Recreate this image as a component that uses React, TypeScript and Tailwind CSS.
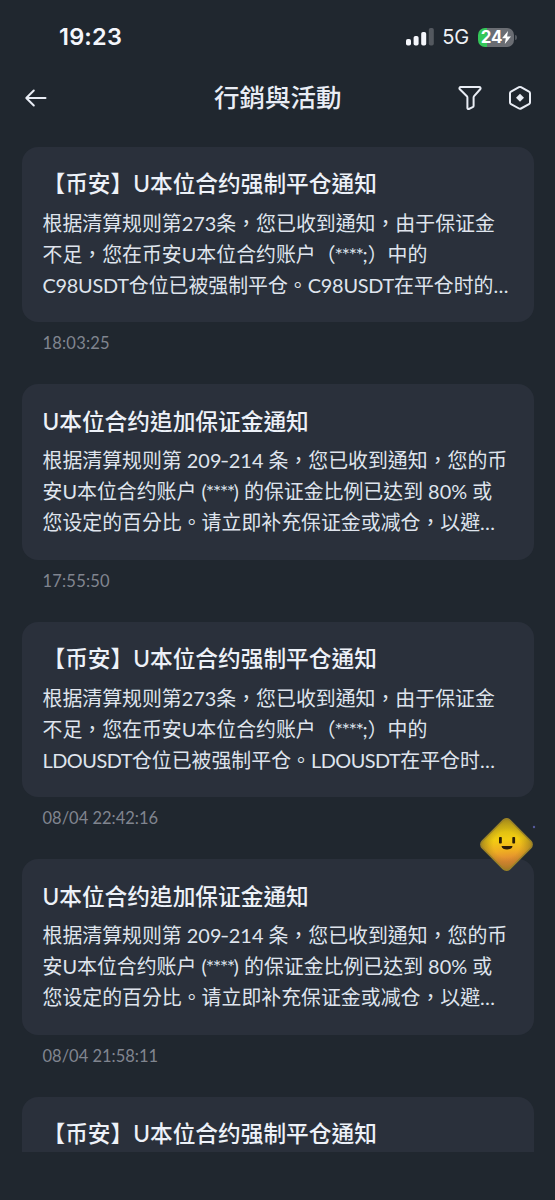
import { clsx } from 'clsx';

type Notice = {
  title: string;
  lines: string[];
  time?: string;
};

const liquidationTitle = '【币安】U本位合约强制平仓通知';
const marginTitle = 'U本位合约追加保证金通知';

const liquidationLines = ['根据清算规则第273条，您已收到通知，由于保证金', '不足，您在币安U本位合约账户（****;）中的'];

const marginLines = [
  '根据清算规则第 209-214 条，您已收到通知，您的币',
  '安U本位合约账户 (****) 的保证金比例已达到 80% 或',
  '您设定的百分比。请立即补充保证金或减仓，以避…',
];

const notices: Notice[] = [
  {
    title: liquidationTitle,
    lines: [...liquidationLines, 'C98USDT仓位已被强制平仓。C98USDT在平仓时的…'],
    time: '18:03:25',
  },
  { title: marginTitle, lines: marginLines, time: '17:55:50' },
  {
    title: liquidationTitle,
    lines: [...liquidationLines, 'LDOUSDT仓位已被强制平仓。LDOUSDT在平仓时…'],
    time: '08/04 22:42:16',
  },
  { title: marginTitle, lines: marginLines, time: '08/04 21:58:11' },
  { title: liquidationTitle, lines: [] },
];

// asterisks, dashes and tickers are spaced differently from the text around them
const spacedRuns = /(\*+|-|C98USDT|LDOUSDT)/;

function StatusBar() {
  return (
    <div className="flex h-[74px] items-center justify-between pr-[38px] pl-[59px] font-['Inter']">
      <span className="text-[23.5px] leading-none font-semibold tracking-[0.2px] text-[#f4f6fb]">19:23</span>
      <div className="flex items-center">
        <svg width="28" height="18" viewBox="0 0 28 18" fill="#f4f6fb">
          <rect x="0" y="11" width="5" height="6.5" rx="1.8" />
          <rect x="7.6" y="8" width="5" height="9.5" rx="1.8" />
          <rect x="15.2" y="4" width="5" height="13.5" rx="1.8" />
          <rect x="22.8" y="0" width="5" height="17.5" rx="1.8" fill="#53585f" />
        </svg>
        <span className="ml-[8px] text-[20px] leading-none tracking-[-0.2px] text-[#eef0f5]">5G</span>
        <div className="ml-[9px] flex h-[19px] w-9 items-center justify-center rounded-[7px] bg-[linear-gradient(90deg,#34c759_9px,#6a6d73_9px)] text-white">
          <span className="text-[17px] leading-none font-bold tracking-[-0.3px]">24</span>
          <svg width="9" height="13" viewBox="0 0 9 13" fill="currentColor">
            <path d="M6 0 0 7.3h3.8L2.8 13 9 5.4H5.1z" />
          </svg>
        </div>
        <div className="ml-px h-[5px] w-[2px] rounded-r-full bg-[#53585f]" />
      </div>
    </div>
  );
}

function Header() {
  return (
    <header className="grid h-[48px] grid-cols-[1fr_auto_1fr] items-center pr-[23.5px] pl-[24px] text-[#e9edf5]">
      <svg width="23" height="18" viewBox="0 0 23 18" fill="none" stroke="currentColor" strokeWidth="2" strokeLinecap="round" strokeLinejoin="round">
        <path d="M21.5 9H2.5M9.8 1.5 2.3 9l7.5 7.5" />
      </svg>
      <h1 className="text-[25.5px] leading-none font-medium">行銷與活動</h1>
      <div className="flex items-center justify-end gap-[25px]">
        <svg width="26" height="26" viewBox="0 0 26 26" fill="none" stroke="currentColor" strokeWidth="2" strokeLinejoin="round">
          <path d="M3.7 2h18.6a1.3 1.3 0 0 1 1.1 2L17.1 11.2a2 2 0 0 0-.5 1.3V20.8a1.5 1.5 0 0 1-.9 1.4L11.8 24a1 1 0 0 1-1.4-.9V12.5a2 2 0 0 0-.5-1.3L2.6 4a1.3 1.3 0 0 1 1.1-2Z" />
        </svg>
        <svg width="24" height="26" viewBox="0 0 24 26" fill="none" stroke="currentColor" strokeWidth="2" strokeLinejoin="round">
          <path d="M11 2.2a2 2 0 0 1 2 0l8 4.400a2 2 0 0 1 1 1.700v9.100a2 2 0 0 1-1 1.700l-8 4.400a2 2 0 0 1-2 0l-8-4.400a2 2 0 0 1-1-1.700V8.300a2 2 0 0 1 1-1.700z" />
          <path d="M12 8.800 16 12.800 12 16.800 8 12.800z" fill="currentColor" stroke="none" />
        </svg>
      </div>
    </header>
  );
}

function NoticeLine({ text }: { text: string }) {
  return (
    <span className="block">
      {text.split(spacedRuns).map((part, i) => (
        <span
          key={i}
          className={clsx(
            part.startsWith('*') && '-ml-px tracking-[-1.5px]',
            part === '-' && 'inline-block origin-center scale-x-125 -translate-y-px',
            part === 'C98USDT' && 'tracking-[-0.25px]',
            part === 'LDOUSDT' && 'tracking-[-0.5px]',
          )}
        >
          {part}
        </span>
      ))}
    </span>
  );
}

function NoticeCard({ notice }: { notice: Notice }) {
  if (!notice.time) {
    return (
      <li className="h-[55.5px] shrink-0 rounded-t-[16px] bg-[#2a303b] px-[21px] pt-[21.5px]">
        <h2 className="text-[22.7px] leading-[32px] font-medium whitespace-nowrap text-[#edf1f8]">{notice.title}</h2>
      </li>
    );
  }

  return (
    <li className="h-[237.5px] shrink-0">
      <article className="h-[175.5px] rounded-[16px] bg-[#2a303b] px-[21px] pt-[21.5px]">
        <h2 className="text-[22.7px] leading-[32px] font-medium whitespace-nowrap text-[#edf1f8]">{notice.title}</h2>
        <p className="mt-[7.5px] text-[19.9px] leading-[31.2px] whitespace-nowrap text-[#dfe4ed]">
          {notice.lines.map((line) => (
            <NoticeLine key={line} text={line} />
          ))}
        </p>
      </article>
      <time className={clsx('mt-[9px] block pl-[21px] text-[16.5px] leading-6 text-[#80858f]', notice.time.length < 9 && 'tracking-[0.2px]')}>
        {notice.time}
      </time>
    </li>
  );
}

function Mascot() {
  return (
    <div className="absolute top-[817px] left-[479px]">
      <svg width="58" height="56" viewBox="0 0 58 56">
        <defs>
          <linearGradient id="face" gradientUnits="userSpaceOnUse" x1="25" y1="4" x2="29" y2="52">
            <stop offset="0.15" stopColor="#d9bb12" />
            <stop offset="0.38" stopColor="#f3cd12" />
            <stop offset="0.62" stopColor="#efae22" />
            <stop offset="0.85" stopColor="#df8236" />
          </linearGradient>
          <radialGradient id="rim">
            <stop offset="0.5" stopColor="#a98a18" stopOpacity="0" />
            <stop offset="1" stopColor="#8d7420" stopOpacity="0.75" />
          </radialGradient>
        </defs>
        <path
          d="M24 3.300a5 5 0 0 1 7 0L51.700 24a5 5 0 0 1 0 7L31 51.700a5 5 0 0 1-7 0L3.300 31a5 5 0 0 1 0-7z"
          fill="url(#face)"
        />
        <path
          d="M24 3.300a5 5 0 0 1 7 0L51.700 24a5 5 0 0 1 0 7L31 51.700a5 5 0 0 1-7 0L3.300 31a5 5 0 0 1 0-7z"
          fill="url(#rim)"
          stroke="#9a8228"
          strokeWidth="1.5"
        />
        <rect x="20" y="20" width="2.8" height="6.5" rx="0.8" fill="#2a1c08" />
        <rect x="33.3" y="20" width="2.8" height="6.5" rx="0.8" fill="#2a1c08" />
        <path d="M22.500 29h11c-.3 2.400-2.500 3.500-5.500 3.500s-5.200-1.100-5.500-3.500Z" fill="#2a1c08" />
        <circle cx="55" cy="10" r="1.2" fill="#555a9c" />
      </svg>
    </div>
  );
}

export default function App() {
  return (
    <div
      lang="zh-Hant"
      className="relative flex h-[1200px] w-[555px] flex-col overflow-hidden bg-[#20272f] font-['Lato','Noto_Sans_CJK_TC',sans-serif]"
    >
      <StatusBar />
      <Header />
      <ul className="mt-[24.5px] flex flex-col pr-[21px] pl-[21.5px]">
        {notices.map((notice, i) => (
          <NoticeCard key={i} notice={notice} />
        ))}
      </ul>
      <Mascot />
    </div>
  );
}
